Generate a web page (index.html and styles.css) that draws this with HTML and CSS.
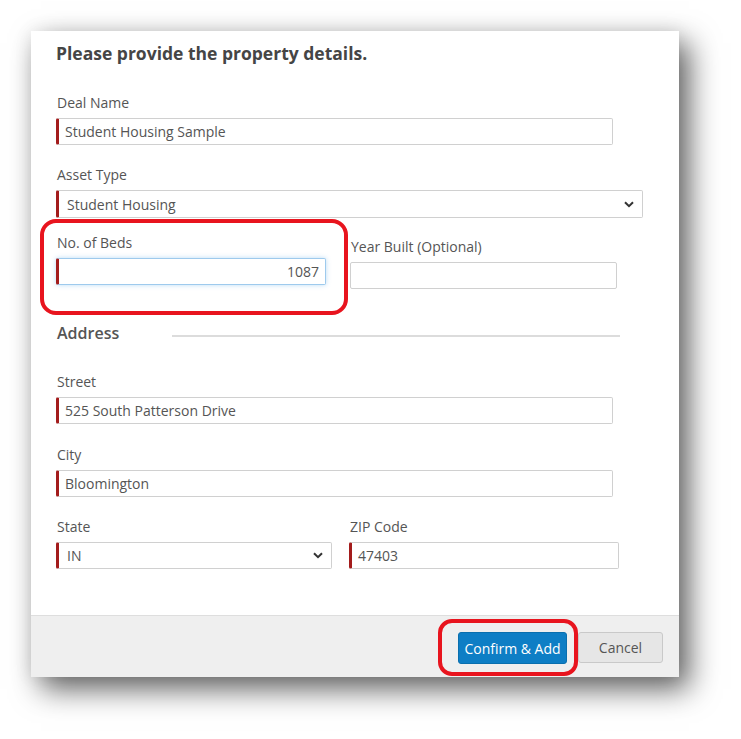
FILE: index.html
```html
<!DOCTYPE html>
<html>
<head>
<meta charset="utf-8">
<link rel="stylesheet" href="styles.css">
</head>
<body>
<div class="panel">
  <div class="content">
    <h1 class="title">Please provide the property details.</h1>

    <div class="field">
      <div class="label">Deal Name</div>
      <div class="input req w-deal">Student Housing Sample</div>
    </div>

    <div class="field field-asset">
      <div class="label">Asset Type</div>
      <div class="input req select w-asset"><span class="sel-text">Student Housing</span>
        <svg class="chev" width="10" height="7" viewBox="0 0 10 7"><path d="M1 1.2 L5 5.2 L9 1.2" fill="none" stroke="#333" stroke-width="2"/></svg>
      </div>
    </div>

    <div class="row">
      <div class="field">
        <div class="label">No. of Beds</div>
        <div class="input req focus w-beds right">1087</div>
      </div>
      <div class="field field-year">
        <div class="label">Year Built (Optional)</div>
        <div class="input w-year"></div>
      </div>
    </div>

    <div class="section">
      <span class="section-title">Address</span>
      <span class="section-line"></span>
    </div>

    <div class="field field-loose">
      <div class="label">Street</div>
      <div class="input req w-deal">525 South Patterson Drive</div>
    </div>

    <div class="field">
      <div class="label">City</div>
      <div class="input req w-deal">Bloomington</div>
    </div>

    <div class="row">
      <div class="field">
        <div class="label">State</div>
        <div class="input req select w-state"><span class="sel-text">IN</span>
          <svg class="chev" width="10" height="7" viewBox="0 0 10 7"><path d="M1 1.2 L5 5.2 L9 1.2" fill="none" stroke="#333" stroke-width="2"/></svg>
        </div>
      </div>
      <div class="field field-zip">
        <div class="label">ZIP Code</div>
        <div class="input req w-zip">47403</div>
      </div>
    </div>
  </div>
  <div class="footer">
    <button class="btn btn-primary">Confirm &amp; Add</button>
    <button class="btn btn-default">Cancel</button>
  </div>
</div>
<div class="mark mark-beds"></div>
<div class="mark mark-confirm"></div>
</body>
</html>
```

FILE: styles.css
```css
html, body {
  margin: 0;
  padding: 0;
  background: #ffffff;
}
body {
  width: 741px;
  height: 739px;
  position: relative;
  overflow: hidden;
  font-family: "Open Sans", "Noto Sans", "DejaVu Sans", sans-serif;
  color: #555;
}
.panel {
  margin: 31px 0 0 31px;
  width: 648px;
  height: 646px;
  background: #fff;
  display: flex;
  flex-direction: column;
  box-shadow: 10px 12px 28px rgba(0,0,0,0.62), 0 0 18px rgba(0,0,0,0.07);
}
.content {
  height: 584px;
  padding: 12px 0 0 25px;
  box-sizing: border-box;
}
.title {
  margin: 0 0 31px 0;
  font-size: 17.5px;
  line-height: 20px;
  font-weight: 700;
  color: #454545;
}
.field {
  margin-bottom: 21px;
}
.field-asset {
  margin-bottom: 16px;
}
.field-loose {
  margin-bottom: 22px;
}
.label {
  font-size: 14px;
  line-height: 18px;
  height: 18px;
  margin-bottom: 6px;
  color: #555;
  padding-left: 1px;
}
.input {
  height: 27px;
  box-sizing: border-box;
  border: 1px solid #d0d0d0;
  border-radius: 2px;
  font-size: 14px;
  line-height: 25px;
  color: #555;
  padding-left: 8px;
  display: flex;
  align-items: center;
  background: #fff;
}
.req {
  border-left: 3px solid #a31c1c;
  padding-left: 6px;
}
.select {
  justify-content: space-between;
  padding-right: 8px;
}
.select .sel-text {
  padding-left: 2px;
}
.w-deal { width: 557px; }
.w-asset { width: 587px; height: 28px; }
.w-beds { width: 270px; }
.w-year { width: 267px; }
.w-state { width: 276px; }
.w-zip { width: 270px; }
.right {
  justify-content: flex-end;
  padding-right: 6px;
}
.focus {
  border-top-color: #9ecaed;
  border-right-color: #9ecaed;
  border-bottom-color: #9ecaed;
  box-shadow: 0 0 5px rgba(102,175,233,0.45);
}
.row {
  display: flex;
}
.field-year {
  margin-left: 24px;
  padding-top: 4px;
}
.field-zip {
  margin-left: 17px;
}
.section {
  display: flex;
  align-items: center;
  height: 20px;
  margin: 13px 0 30px 0;
}
.section-title {
  font-size: 16px;
  font-weight: 600;
  color: #555;
  line-height: 20px;
  width: 115px;
  padding-left: 1px;
}
.section-line {
  width: 448px;
  height: 2px;
  background: #dcdcdc;
  margin-top: 6px;
}
.footer {
  flex: 1;
  background: #efefef;
  border-top: 1px solid #dedede;
  display: flex;
  justify-content: flex-end;
  align-items: flex-start;
  padding: 16px 16px 0 0;
  gap: 11px;
}
.btn {
  font-family: "Open Sans", "Noto Sans", "DejaVu Sans", sans-serif;
  font-size: 14px;
  height: 32px;
  border-radius: 3px;
  padding: 0;
}
.btn-primary {
  width: 109px;
  background: #0e7ec5;
  border: 1px solid #0a6fae;
  color: #fff;
}
.btn-default {
  width: 85px;
  height: 31px;
  background: #e6e6e6;
  border: 1px solid #c9c9c9;
  color: #555;
}
.mark {
  position: absolute;
  border: 4px solid #e8141e;
  box-sizing: border-box;
}
.mark-beds {
  left: 40px;
  top: 219px;
  width: 308px;
  height: 96px;
  border-radius: 16px;
}
.mark-confirm {
  left: 438px;
  top: 619px;
  width: 140px;
  height: 57px;
  border-radius: 14px;
}
```
